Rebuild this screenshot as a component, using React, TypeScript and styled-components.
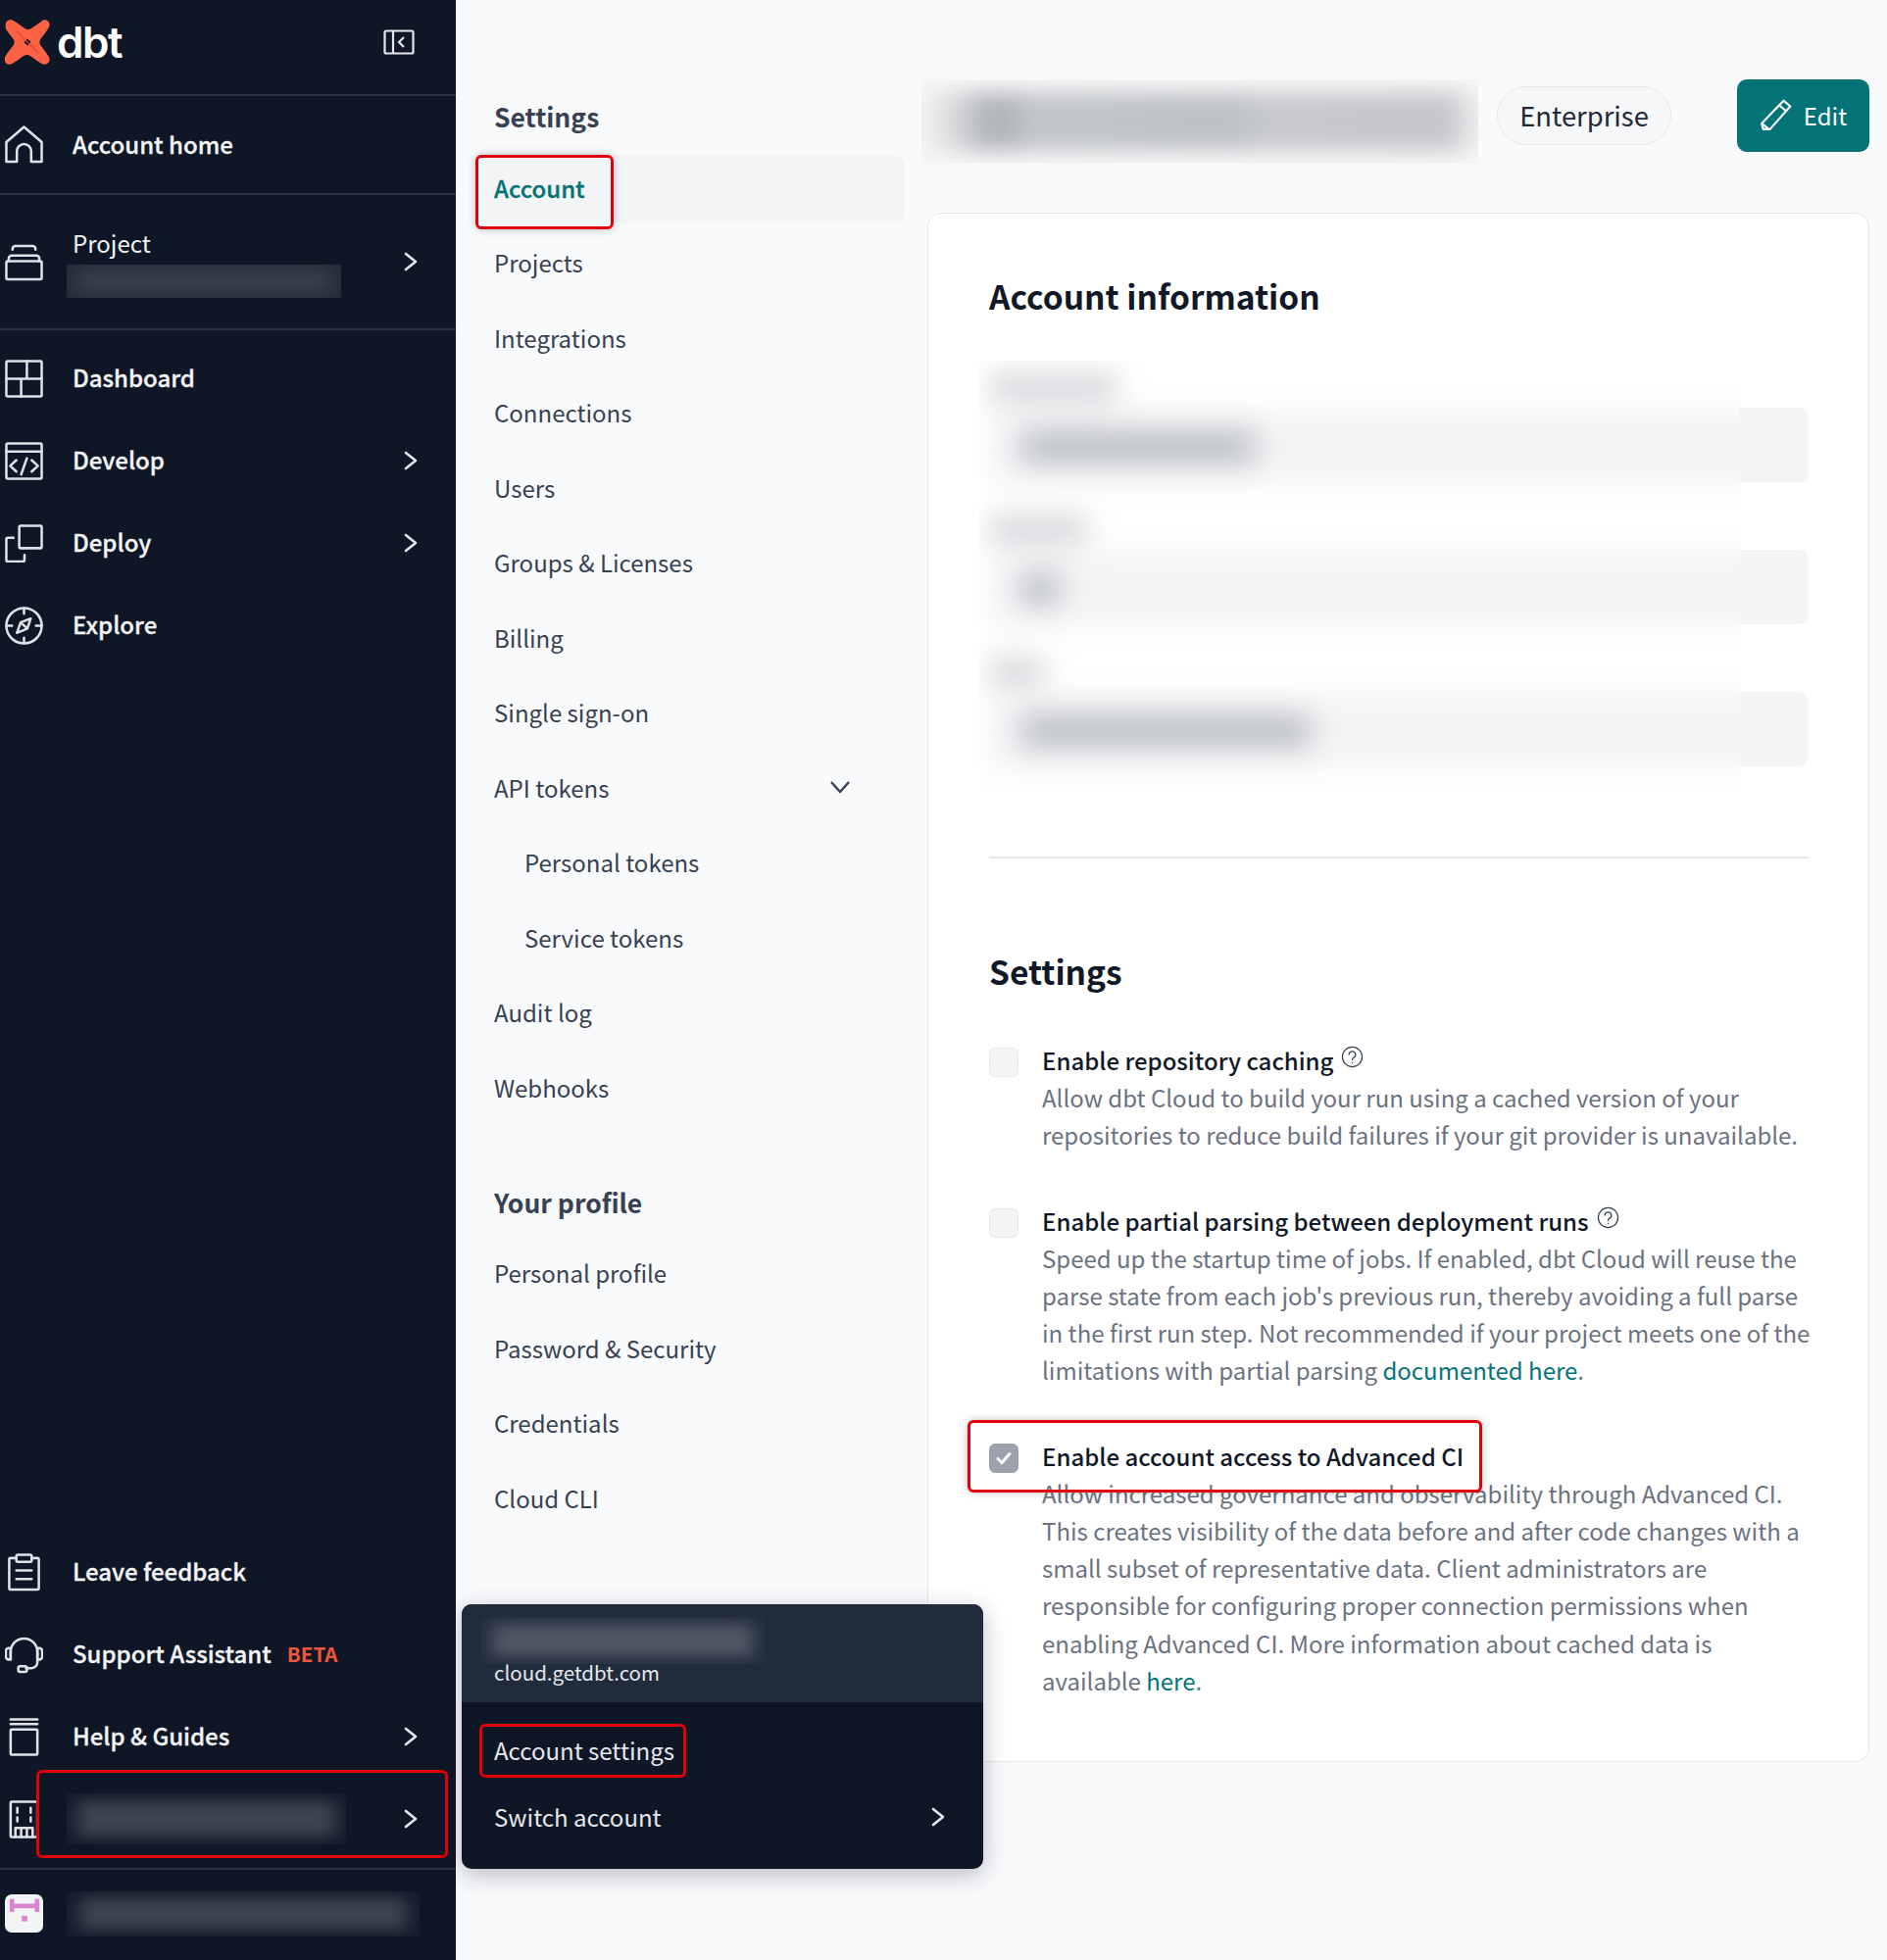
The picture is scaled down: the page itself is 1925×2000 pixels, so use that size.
import React from 'react';
import styled, { createGlobalStyle } from 'styled-components';

const FONT = `"Noto Sans CJK SC", "Source Sans Pro", "Noto Sans", sans-serif`;

const GlobalStyle = createGlobalStyle`
  html, body {
    margin: 0;
    padding: 0;
    background: #f9fafc;
    font-family: ${FONT};
  }
  * { box-sizing: border-box; }
`;

// --------------- Icons ---------------
const Svg = styled.svg<{ $w?: number }>`
  width: ${(p) => p.$w ?? 40}px;
  height: ${(p) => p.$w ?? 40}px;
  fill: none;
  stroke: currentColor;
  stroke-width: 2.600;
  stroke-linecap: round;
  stroke-linejoin: round;
  flex: none;
`;

const HomeIcon = () => (
  <Svg viewBox='0 0 40 40'>
    <path d='M1.500 17.500 20 1.500l18.500 16V38H27.500V27a7.500 7.500 0 0 0-15 0v11H1.500z' />
  </Svg>
);
const ProjectIcon = () => (
  <Svg viewBox='0 0 40 40'>
    <rect x='1.500' y='19' width='37' height='19' rx='1.500' />
    <path d='M4 19v-3a3 3 0 0 1 3-3h26a3 3 0 0 1 3 3v3M8 7V6a3 3 0 0 1 3-3h18a3 3 0 0 1 3 3v1' />
  </Svg>
);
const DashboardIcon = () => (
  <Svg viewBox='0 0 40 40'>
    <rect x='1.500' y='1.500' width='37' height='37' rx='1.500' />
    <path d='M1.500 20h37M23 1.500V20M17 20v18.500' />
  </Svg>
);
const DevelopIcon = () => (
  <Svg viewBox='0 0 40 40'>
    <rect x='1.500' y='1.500' width='37' height='37' rx='1.500' />
    <path d='M1.500 10h37M12 19l-6.500 6 6.500 6M28 19l6.500 6-6.500 6M23 17l-6 17' />
  </Svg>
);
const DeployIcon = () => (
  <Svg viewBox='0 0 40 40'>
    <rect x='15' y='1.500' width='23.500' height='23.500' rx='1.500' />
    <path d='M9 14H3a1.500 1.500 0 0 0-1.500 1.500v22A1.500 1.500 0 0 0 3 39h16a1.500 1.500 0 0 0 1.500-1.500V32' />
  </Svg>
);
const ExploreIcon = () => (
  <Svg viewBox='0 0 40 40'>
    <circle cx='20' cy='20' r='18.500' />
    <path d='M27 12.500 23.500 23 12.500 27.500 16.500 16.500zM16.500 16.500l7 6.500M20 1.500v6M20 32.500v6M1.500 20h6M32.500 20h6' />
  </Svg>
);
const FeedbackIcon = () => (
  <Svg viewBox='0 0 40 40'>
    <path d='M12 5H6a1.500 1.500 0 0 0-1.500 1.500v30A1.500 1.500 0 0 0 6 38h28a1.500 1.500 0 0 0 1.500-1.500v-30A1.500 1.500 0 0 0 34 5h-6' />
    <rect x='12' y='1.500' width='16' height='7.500' rx='1.500' />
    <path d='M12 18h16M12 27h16' />
  </Svg>
);
const SupportIcon = () => (
  <Svg viewBox='0 0 40 40'>
    <path d='M6 24V17a14 14 0 0 1 28 0v7' />
    <path d='M6 13H4a3 3 0 0 0-3 3v6a3 3 0 0 0 3 3h2zM34 13h2a3 3 0 0 1 3 3v6a3 3 0 0 1-3 3h-2zM34 25v3a6 6 0 0 1-6 6h-6' />
    <rect x='14' y='32' width='9' height='6' rx='2' />
  </Svg>
);
const HelpIcon = () => (
  <Svg viewBox='0 0 40 40'>
    <rect x='6' y='12' width='28' height='26.500' rx='1' />
    <path d='M6 1.500h28M6 6.500h28' />
  </Svg>
);
const BuildingIcon = () => (
  <Svg viewBox='0 0 40 40'>
    <rect x='6' y='1.500' width='28' height='37' rx='1' />
    <path d='M13 8v5M27 8v5M13 18v4M27 18v4M11 38.500V29h18v9.500M17 29v9.500M23 29v9.500' />
  </Svg>
);
const ChevronRight = () => (
  <Svg viewBox='0 0 14 20' $w={20} style={{ height: 20 }}>
    <path d='m2 2 10 8-10 8' />
  </Svg>
);
const ChevronDown = () => (
  <ChevronDownSvg viewBox='0 0 22 14'>
    <path d='m2 2 9 10 9-10' />
  </ChevronDownSvg>
);
const CollapseIcon = () => (
  <CollapseSvg viewBox='0 0 32 26'>
    <rect x='1.500' y='1.500' width='29' height='23' rx='1.500' />
    <path d='M10 1.500v23M21 8l-5 5 5 5' />
  </CollapseSvg>
);
const PencilIcon = () => (
  <PencilSvg viewBox='0 0 32 32'>
    <path d='M23 2.500 29.500 8 10 30H3.500L2 24.500zM19 7l7 6M3 25l6 5' />
  </PencilSvg>
);
const HelpCircle = () => (
  <HelpSvg viewBox='0 0 24 24'>
    <circle cx='12' cy='12' r='10.500' />
    <path d='M8.500 9.500a3.500 3.500 0 1 1 5 3.200c-1 .5-1.500 1.200-1.500 2.300M12 18.200v.3' />
  </HelpSvg>
);
const CheckIcon = () => (
  <CheckSvg viewBox='0 0 20 20'>
    <path d='m4 10.500 4 4 8-9' />
  </CheckSvg>
);
const DbtMark = () => (
  <MarkSvg viewBox='0 0 46 46'>
    <path
      fill='#fe6244'
      d='M40 .3c3-.5 5.600 2.300 5.600 5 0 1.200-.5 2.300-1.200 3.500-2.500 4.300-6.700 9.300-8 11-1.300 1.700-1.300 4.700 0 6.400 1.300 1.700 5.600 7 8 11 .8 1.300 1.200 2.300 1.200 3.500 0 2.700-2.600 5.300-5.600 5-1.300-.1-2.600-.8-4-1.700-4-2.500-9-6.300-10.500-7.300-1.700-1.100-4.500-1.100-6 0-1.500 1-6.500 4.800-10.500 7.300-1.400.9-2.700 1.600-4 1.700-3 .3-5.600-2.300-5.600-5 0-1.200.5-2.200 1.200-3.500 2.400-4 6.700-9.300 8-11 1.300-1.700 1.300-4.700 0-6.400-1.300-1.700-5.500-6.700-8-11C1.100 7.600.6 6.500.6 5.300c0-2.700 2.600-5.500 5.600-5 1.300.2 2.600.8 4 1.700 4 2.500 9 6.300 10.500 7.300 1.500 1.100 4.300 1.100 6 0 1.500-1 6.500-4.800 10.500-7.300C38.100 1.100 39 .5 40 .3z'
    />
    <path fill='#0f1726' d='m23 19.500 3.500 3.500-3.500 3.500-3.500-3.500z' />
    <path stroke='#d8492f' strokeWidth='1.200' fill='none' d='M12 12c4 4 7 7 11 11M23 23c4 4 7 7 11 11' />
  </MarkSvg>
);

// --------------- Data ---------------
const settingsItems = ['Projects', 'Integrations', 'Connections', 'Users', 'Groups & Licenses', 'Billing', 'Single sign-on'];
const profileItems = ['Personal profile', 'Password & Security', 'Credentials', 'Cloud CLI'];

export default function App(): React.JSX.Element {
  return (
    <Page>
      <GlobalStyle />
      {/* Sidebar */}
      <Sidebar>
        <LogoBar>
          <DbtMark />
          <LogoText>dbt</LogoText>
          <CollapseIcon />
        </LogoBar>
        <HomeRow>
          <IconSlot><HomeIcon /></IconSlot>
          <NavLabel>Account home</NavLabel>
        </HomeRow>
        <ProjectRow>
          <IconSlot><ProjectIcon /></IconSlot>
          <ProjectText>
            <NavLabelLight>Project</NavLabelLight>
            <Smudge $w={280} $h={34} $flat />
          </ProjectText>
          <ChevronSlot><ChevronRight /></ChevronSlot>
        </ProjectRow>
        <NavGroup>
          <NavRow><IconSlot><DashboardIcon /></IconSlot><NavLabel>Dashboard</NavLabel></NavRow>
          <NavRow><IconSlot><DevelopIcon /></IconSlot><NavLabel>Develop</NavLabel><ChevronSlot><ChevronRight /></ChevronSlot></NavRow>
          <NavRow><IconSlot><DeployIcon /></IconSlot><NavLabel>Deploy</NavLabel><ChevronSlot><ChevronRight /></ChevronSlot></NavRow>
          <NavRow><IconSlot><ExploreIcon /></IconSlot><NavLabel>Explore</NavLabel></NavRow>
        </NavGroup>
        <BottomGroup>
          <NavRow><IconSlot><FeedbackIcon /></IconSlot><NavLabel>Leave feedback</NavLabel></NavRow>
          <NavRow>
            <IconSlot><SupportIcon /></IconSlot>
            <NavLabel>Support Assistant</NavLabel>
            <BetaTag>BETA</BetaTag>
          </NavRow>
          <NavRow><IconSlot><HelpIcon /></IconSlot><NavLabel>Help &amp; Guides</NavLabel><ChevronSlot><ChevronRight /></ChevronSlot></NavRow>
          <NavRow>
            <IconSlot><BuildingIcon /></IconSlot>
            <Smudge $w={285} $h={52} />
            <ChevronSlot><ChevronRight /></ChevronSlot>
            <SidebarMark />
          </NavRow>
        </BottomGroup>
        <UserRow>
          <Avatar>
            <svg viewBox='0 0 40 40' width='38' height='38'>
              <path fill='#d985cf' d='M4 4h5v5h22V4h5v14h-5v-4H9v4H4z' />
              <rect x='17' y='22' width='6' height='6' fill='#d985cf' />
            </svg>
          </Avatar>
          <Smudge $w={360} $h={46} />
        </UserRow>
      </Sidebar>

      {/* Settings menu */}
      <SettingsNav>
        <NavTitle>Settings</NavTitle>
        <ActiveItem>
          Account
          <AccountMark />
        </ActiveItem>
        {settingsItems.map((item) => (
          <MenuItem key={item}>{item}</MenuItem>
        ))}
        <MenuItem>
          API tokens
          <ChevronDown />
        </MenuItem>
        <SubItem>Personal tokens</SubItem>
        <SubItem>Service tokens</SubItem>
        <MenuItem>Audit log</MenuItem>
        <MenuItem>Webhooks</MenuItem>
        <ProfileTitle>Your profile</ProfileTitle>
        {profileItems.map((item) => (
          <MenuItem key={item}>{item}</MenuItem>
        ))}
      </SettingsNav>

      {/* Main */}
      <Main>
        <Header>
          <HeaderBlur><HeaderInk /></HeaderBlur>
          <PlanPill>Enterprise</PlanPill>
          <EditButton><PencilIcon />Edit</EditButton>
        </Header>
        <Card>
          <CardTitle>Account information</CardTitle>
          <FormArea>
            <InputStack>
              <FieldInput />
              <FieldInput />
              <FieldInput />
            </InputStack>
            <FormShield>
              <ShieldInk>
                <ShieldField><ShieldLabel $w={130} /><ShieldInput><ShieldValue $w={240} /></ShieldInput></ShieldField>
                <ShieldField><ShieldLabel $w={100} /><ShieldInput><ShieldValue $w={40} /></ShieldInput></ShieldField>
                <ShieldField><ShieldLabel $w={56} /><ShieldInput><ShieldValue $w={296} /></ShieldInput></ShieldField>
              </ShieldInk>
            </FormShield>
          </FormArea>
          <Divider />
          <SectionTitle>Settings</SectionTitle>
          <OptionRow>
            <CheckBox />
            <OptionBody>
              <OptionTitle>Enable repository caching<HelpCircle /></OptionTitle>
              <OptionText>
                Allow dbt Cloud to build your run using a cached version of your repositories to reduce build failures if your git provider is unavailable.
              </OptionText>
            </OptionBody>
          </OptionRow>
          <OptionRow>
            <CheckBox />
            <OptionBody>
              <OptionTitle>Enable partial parsing between deployment runs<HelpCircle /></OptionTitle>
              <OptionText>
                Speed up the startup time of jobs. If enabled, dbt Cloud will reuse the parse state from each job's previous run, thereby avoiding a full parse in the first run step. Not recommended if your project meets one of the limitations with partial parsing <DocLink>documented here</DocLink>.
              </OptionText>
            </OptionBody>
          </OptionRow>
          <OptionRow>
            <CheckBox $checked><CheckIcon /></CheckBox>
            <OptionBody>
              <OptionTitle>Enable account access to Advanced CI</OptionTitle>
              <OptionText>
                Allow increased governance and observability through Advanced CI. This creates visibility of the data before and after code changes with a small subset of representative data. Client administrators are responsible for configuring proper connection permissions when enabling Advanced CI. More information about cached data is available <DocLink>here</DocLink>.
              </OptionText>
            </OptionBody>
            <AdvancedMark />
          </OptionRow>
        </Card>
      </Main>

      {/* Account popup */}
      <Popup>
        <PopupHead>
          <Smudge $w={290} $h={48} $light />
          <PopupHost>cloud.getdbt.com</PopupHost>
        </PopupHead>
        <PopupBody>
          <PopupItem>
            Account settings
            <PopupMark />
          </PopupItem>
          <PopupItem>
            Switch account
            <PopupChevron><ChevronRight /></PopupChevron>
          </PopupItem>
        </PopupBody>
      </Popup>
    </Page>
  );
}

// --------------- Blur helper ---------------
function Smudge({ $w, $h, $light, $flat }: { $w: number; $h: number; $light?: boolean; $flat?: boolean }) {
  return (
    <SmudgeClip $w={$w} $h={$h} $light={$light} $flat={$flat}>
      <SmudgeInk $light={$light} $flat={$flat} />
    </SmudgeClip>
  );
}

// --------------- Styled ---------------
const Page = styled.div`
  position: relative;
  display: flex;
  width: 1925px;
  height: 2000px;
  overflow: hidden;
  background: #f9fafc;
`;

const Sidebar = styled.aside`
  width: 465px;
  flex: none;
  display: flex;
  flex-direction: column;
  background: #0f1726;
  color: #e5e7eb;
`;

const LogoBar = styled.div`
  height: 98px;
  display: flex;
  align-items: center;
  padding: 0 0 0 5px;
  border-bottom: 2px solid #2a3343;
`;

const MarkSvg = styled.svg`
  width: 46px;
  height: 46px;
  margin-top: -11px;
  flex: none;
`;

const LogoText = styled.span`
  margin: -10px 0 0 7px;
  font-family: "Inter", sans-serif;
  font-size: 44px;
  line-height: 1;
  font-weight: 600;
  letter-spacing: -1.500px;
  color: #fff;
`;

const CollapseSvg = styled.svg`
  width: 32px;
  height: 26px;
  margin: -11px 42px 0 auto;
  fill: none;
  stroke: #e5e7eb;
  stroke-width: 2.200;
`;

const IconSlot = styled.div`
  width: 39px;
  height: 39px;
  flex: none;
  display: flex;
  align-items: center;
  justify-content: center;
  color: #dfe2e6;
  svg {
    width: 39px;
    height: 39px;
  }
`;

const NavRow = styled.div`
  position: relative;
  height: 84px;
  display: flex;
  align-items: center;
  padding-left: 5px;
  gap: 24px;
`;

const HomeRow = styled(NavRow)`
  height: 101px;
  border-bottom: 2px solid #2a3343;
`;

const ProjectRow = styled(NavRow)`
  height: 138px;
  border-bottom: 2px solid #2a3343;
`;

const ProjectText = styled.div`
  display: flex;
  flex-direction: column;
`;

const NavLabel = styled.span`
  margin: 0 0 3px 6px;
  font-size: 24px;
  font-weight: 500;
  -webkit-text-stroke: 0.300px #f3f4f6;
  color: #f3f4f6;
  white-space: nowrap;
`;

const NavLabelLight = styled(NavLabel)`
  font-weight: 400;
  -webkit-text-stroke: 0;
  line-height: 36px;
  margin-bottom: 4px;
`;

const ChevronSlot = styled.div`
  position: absolute;
  left: 409px;
  top: 50%;
  transform: translateY(-50%);
  display: flex;
  color: #e5e7eb;
`;

const NavGroup = styled.nav`
  padding-top: 7px;
`;

const BottomGroup = styled.nav`
  margin-top: auto;
  padding-bottom: 8px;
  border-bottom: 2px solid #2a3343;
`;

const BetaTag = styled.span`
  margin: 0 0 3px -8px;
  font-size: 20.500px;
  font-weight: 600;
  color: #f2553d;
`;

const SidebarMark = styled.div`
  position: absolute;
  left: 37px;
  top: -8px;
  width: 420px;
  height: 90px;
  border: 3px solid #e3000b;
  border-radius: 6px;
`;

const UserRow = styled.div`
  height: 92px;
  display: flex;
  align-items: center;
  gap: 24px;
  padding-left: 5px;
  padding-bottom: 3px;
`;

const Avatar = styled.div`
  width: 39px;
  height: 39px;
  flex: none;
  display: flex;
  align-items: center;
  justify-content: center;
  border-radius: 7px;
  background: #f3f4f6;
`;

const SmudgeClip = styled.div<{ $w: number; $h: number; $light?: boolean; $flat?: boolean }>`
  width: ${(p) => p.$w}px;
  height: ${(p) => p.$h}px;
  overflow: hidden;
  flex: none;
  background: ${(p) => (p.$light ? '#232d3d' : p.$flat ? '#262d3a' : '#151d2c')};
`;

const SmudgeInk = styled.div<{ $light?: boolean; $flat?: boolean }>`
  width: 100%;
  height: 100%;
  background: ${(p) => (p.$light ? '#4f5765' : p.$flat ? '#383f4c' : '#3d4452')};
  transform: scale(0.920, 0.700);
  filter: blur(10px);
`;

// Settings menu
const SettingsNav = styled.nav`
  width: 481px;
  flex: none;
  padding: 98px 0 0 20px;
  display: flex;
  flex-direction: column;
`;

const NavTitle = styled.h3`
  margin: 0 0 19px;
  padding-left: 19px;
  height: 41px;
  font-size: 26.500px;
  line-height: 41px;
  font-weight: 600;
  color: #374151;
`;

const MenuItem = styled.a`
  position: relative;
  width: 438px;
  height: 76.500px;
  display: flex;
  align-items: center;
  justify-content: space-between;
  padding: 0 55px 3px 19px;
  font-size: 24px;
  color: #374151;
`;

const ActiveItem = styled(MenuItem)`
  height: 69px;
  margin-bottom: 4px;
  background: #f3f4f6;
  border-radius: 12px;
  font-weight: 500;
  -webkit-text-stroke: 0.300px #047377;
  color: #047377;
`;

const SubItem = styled(MenuItem)`
  padding-left: 50px;
`;

const ProfileTitle = styled(NavTitle)`
  margin: 57px 0 15px;
`;

const AccountMark = styled.div`
  position: absolute;
  left: 0;
  top: 0;
  width: 141px;
  height: 76px;
  border: 3px solid #e3000b;
  border-radius: 6px;
  box-shadow: 0 0 8px rgba(0, 0, 0, 0.250);
`;

const ChevronDownSvg = styled.svg`
  width: 22px;
  height: 14px;
  fill: none;
  stroke: #374151;
  stroke-width: 2.400;
`;

// Main
const Main = styled.main`
  flex: 1;
  min-width: 0;
  padding: 81px 18px 0 0;
`;

const Header = styled.header`
  height: 74px;
  display: flex;
  align-items: center;
  margin-left: -6px;
`;

const HeaderBlur = styled.div`
  width: 568px;
  height: 86px;
  margin-top: 12px;
  overflow: hidden;
  background: #f7f7f8;
`;

const HeaderInk = styled.div`
  height: 100%;
  background: linear-gradient(
    90deg,
    #f3f3f4 0,
    #dcdee0 5%,
    #a9acb1 13%,
    #c3c6ca 20%,
    #bdc0c4 55%,
    #c8cacd 62%,
    #c3c5c8 95%,
    #f3f3f4 100%
  );
  filter: blur(15px);
  transform: scale(1, 0.700);
`;

const PlanPill = styled.span`
  margin-left: 19px;
  width: 178px;
  height: 60px;
  padding-bottom: 3px;
  display: flex;
  align-items: center;
  justify-content: center;
  border: 1px solid #e5e7eb;
  border-radius: 30px;
  background: #f6f7f8;
  font-size: 27.400px;
  color: #1f2937;
`;

const EditButton = styled.button`
  margin-left: auto;
  width: 135px;
  height: 74px;
  padding-bottom: 3px;
  display: flex;
  align-items: center;
  justify-content: center;
  gap: 11px;
  border: 0;
  border-radius: 10px;
  background: #047377;
  color: #fff;
  font-family: ${FONT};
  font-size: 24px;
`;

const PencilSvg = styled.svg`
  width: 34px;
  height: 34px;
  fill: none;
  stroke: #fff;
  stroke-width: 2;
  stroke-linejoin: round;
`;

const Card = styled.section`
  height: 1581px;
  margin-top: 62px;
  padding: 0 61px 0 62px;
  background: #fff;
  border: 1px solid #e5e7eb;
  border-radius: 14px;
`;

const CardTitle = styled.h2`
  margin: 57px 0 0;
  height: 54px;
  font-size: 33.500px;
  line-height: 54px;
  font-weight: 600;
  color: #111827;
`;

const FormArea = styled.div`
  position: relative;
  height: 422px;
  margin-top: 55px;
`;

const InputStack = styled.div`
  display: flex;
  flex-direction: column;
  gap: 69px;
  padding-top: 32px;
`;

const FieldInput = styled.div`
  height: 76px;
  background: #f3f4f6;
  border-radius: 10px;
`;

const FormShield = styled.div`
  position: absolute;
  left: -10px;
  top: -16px;
  width: 776px;
  height: 442px;
  overflow: hidden;
  background: #fff;
`;

const ShieldInk = styled.div`
  display: flex;
  flex-direction: column;
  gap: 33px;
  padding: 14px 0 0 10px;
  filter: blur(15px);
`;

const ShieldField = styled.div`
  display: flex;
  flex-direction: column;
  gap: 10px;
  width: 800px;
`;

const ShieldLabel = styled.div<{ $w: number }>`
  width: ${(p) => p.$w}px;
  height: 26px;
  background: #cfd2d6;
`;

const ShieldInput = styled.div`
  height: 76px;
  display: flex;
  align-items: center;
  padding-left: 32px;
  background: #f3f4f6;
`;

const ShieldValue = styled.div<{ $w: number }>`
  width: ${(p) => p.$w}px;
  height: 36px;
  background: #bec1c5;
`;

const Divider = styled.hr`
  margin: 68px 0 0;
  border: 0;
  height: 2px;
  background: #e5e7eb;
`;

const SectionTitle = styled.h2`
  margin: 88px 0 -4px;
  height: 54px;
  font-size: 33.500px;
  line-height: 54px;
  font-weight: 600;
  color: #111827;
`;

const OptionRow = styled.div`
  position: relative;
  display: flex;
  gap: 24px;
  margin-top: 49px;
`;

const CheckBox = styled.div<{ $checked?: boolean }>`
  width: 30px;
  height: 30px;
  flex: none;
  margin-top: 6px;
  display: flex;
  align-items: center;
  justify-content: center;
  border-radius: 6px;
  background: ${(p) => (p.$checked ? '#9ca3af' : '#f3f4f6')};
  border: 1px solid ${(p) => (p.$checked ? '#9ca3af' : '#e5e7eb')};
`;

const CheckSvg = styled.svg`
  width: 20px;
  height: 20px;
  fill: none;
  stroke: #fff;
  stroke-width: 3;
  stroke-linecap: round;
`;

const OptionBody = styled.div`
  flex: 1;
  min-width: 0;
`;

const OptionTitle = styled.div`
  display: flex;
  align-items: flex-start;
  gap: 8px;
  font-size: 24px;
  line-height: 38.200px;
  font-weight: 500;
  color: #111827;
`;

const HelpSvg = styled.svg`
  width: 23px;
  height: 23px;
  margin-top: 4px;
  fill: none;
  stroke: #374151;
  stroke-width: 1.300;
  stroke-linecap: round;
`;

const OptionText = styled.p`
  margin: 0 -4px 0 0;
  font-size: 24px;
  line-height: 38.200px;
  color: #6b7280;
`;

const DocLink = styled.a`
  color: #047377;
`;

const AdvancedMark = styled.div`
  position: absolute;
  left: -22px;
  top: -18px;
  width: 525px;
  height: 74px;
  border: 3px solid #e3000b;
  border-radius: 6px;
  box-shadow: 0 0 8px rgba(0, 0, 0, 0.250);
`;

// Popup
const Popup = styled.div`
  position: absolute;
  left: 471px;
  top: 1637px;
  width: 532px;
  height: 270px;
  border-radius: 10px;
  background: #0f1726;
  box-shadow: 0 6px 24px rgba(15, 23, 38, 0.280);
  color: #e5e7eb;
`;

const PopupHead = styled.div`
  height: 100px;
  padding: 13px 0 0 19px;
  background: #202b3b;
  border-radius: 10px 10px 0 0;
`;

const PopupHost = styled.div`
  margin: -8px 0 0 14px;
  font-size: 20.500px;
  line-height: 32px;
`;

const PopupBody = styled.div`
  padding-top: 16px;
`;

const PopupItem = styled.div`
  position: relative;
  height: 68px;
  display: flex;
  align-items: center;
  padding: 0 0 3px 33px;
  font-size: 24px;
`;

const PopupMark = styled.div`
  position: absolute;
  left: 18px;
  top: 6px;
  width: 211px;
  height: 55px;
  border: 3px solid #e3000b;
  border-radius: 6px;
`;

const PopupChevron = styled.div`
  margin-left: auto;
  margin-right: 36px;
  display: flex;
`;
